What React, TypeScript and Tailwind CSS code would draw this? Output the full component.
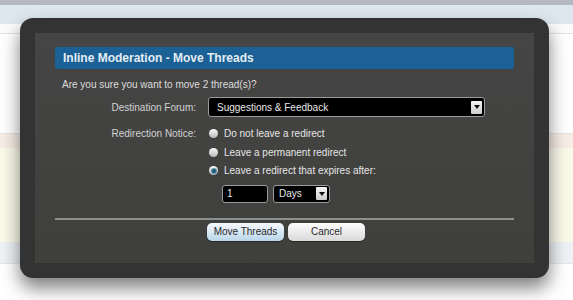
import { ReactNode } from "react";

function ArrowBox() {
  return (
    <span className="flex h-[13px] w-[11px] items-center justify-center rounded-[1px] bg-gradient-to-b from-[#f6f6f6] to-[#cdcdcd]">
      <svg width="6" height="4" viewBox="0 0 6 4">
        <path d="M0 0 L6 0 L3 4 Z" fill="#111" />
      </svg>
    </span>
  );
}

function Radio({ checked, children }: { checked?: boolean; children: ReactNode }) {
  return (
    <label className="flex h-[13px] items-center gap-[6px]">
      <span className="flex h-[9px] w-[9px] items-center justify-center rounded-full bg-gradient-to-b from-[#fbfbfb] to-[#b8b8b8]">
        {checked ? <span className="h-[4px] w-[4px] rounded-full bg-[#1d5a77] ring-1 ring-[#5d93ad]" /> : null}
      </span>
      <span>{children}</span>
    </label>
  );
}

export default function App() {
  return (
    <div className="relative h-[300px] w-[573px] overflow-hidden bg-white font-['Liberation_Sans',sans-serif]">
      {/* page behind the overlay */}
      <div className="h-[5px] bg-[#b3b8c2]" />
      <div className="h-[19px] bg-[#dde7ef]" />
      <div className="h-[10px] border-b border-[#e2e4e6] bg-[#fbfbfb]" />
      <div className="h-[100px] border-b border-[#e6e6e6] bg-white" />
      <div className="h-[14px] bg-[#f7ede5]" />
      <div className="h-[94px] bg-[#fafaeb]" />
      <div className="h-[22px] border-b border-[#e4e6e8] bg-[#eef2f5]" />
      <div className="h-[36px] bg-white" />

      {/* modal */}
      <div className="absolute left-[20px] top-[18px] w-[529px] rounded-[13px] bg-[#333333] px-[15px] pt-[15px] pb-[15px] shadow-[0_10px_18px_rgba(0,0,0,0.5)]">
        <div className="bg-gradient-to-b from-[#454545] to-[#3f3f3c] px-[20px] pt-[14px] pb-[22px]">
          <div className="flex h-[22px] items-center rounded-[2px] bg-[#1b6195] px-[8px] text-[12px] font-bold text-[#e4edf4]">
            Inline Moderation - Move Threads
          </div>
          <div className="mt-[9px] h-[13px] pl-[7px] text-[10px] leading-[13px] text-[#dcdcdc]">
            Are you sure you want to move 2 thread(s)?
          </div>

          <div className="mt-[6px] grid grid-cols-[141px_1fr] gap-x-[12px] text-[10px] leading-[13px] text-[#d2d2d2]">
            <div className="flex h-[20px] items-center justify-end">Destination Forum:</div>
            <div className="flex h-[20px] w-[277px] items-center justify-between rounded-[3px] border border-[#9a9a9a] bg-black pr-[2px] pl-[8px] text-[#e8e8e8]">
              <span>Suggestions &amp; Feedback</span>
              <ArrowBox />
            </div>

            <div className="mt-[10px] h-[13px] text-right">Redirection Notice:</div>
            <div className="mt-[10px] flex flex-col gap-[5.5px] pl-[1px] text-[#e6e6e6]">
              <Radio>Do not leave a redirect</Radio>
              <Radio>Leave a permanent redirect</Radio>
              <Radio checked>Leave a redirect that expires after:</Radio>
              <div className="mt-[2px] flex gap-[5px] pl-[13px]">
                <div className="flex h-[18px] w-[46px] items-center rounded-[3px] border border-[#9a9a9a] bg-black px-[4px] text-[#e8e8e8]">
                  1
                </div>
                <div className="flex h-[18px] w-[57px] items-center justify-between rounded-[3px] border border-[#9a9a9a] bg-black pr-[2px] pl-[5px] text-[#e8e8e8]">
                  <span>Days</span>
                  <ArrowBox />
                </div>
              </div>
            </div>
          </div>

          <div className="mt-[15px] h-[2px] bg-[#8a918f]" />

          <div className="mt-[3px] flex justify-center gap-[4px] pl-[3px] text-[10px] text-[#2a2a2a]">
            <button className="h-[18px] w-[77px] rounded-[5px] bg-gradient-to-b from-[#f6f9fc] to-[#b9d6ea] shadow-[0_1px_1px_rgba(0,0,0,0.4)]">
              Move Threads
            </button>
            <button className="h-[18px] w-[77px] rounded-[5px] bg-gradient-to-b from-[#fdfdfd] to-[#d9d9d9] shadow-[0_1px_1px_rgba(0,0,0,0.4)]">
              Cancel
            </button>
          </div>
        </div>
      </div>
    </div>
  );
}
